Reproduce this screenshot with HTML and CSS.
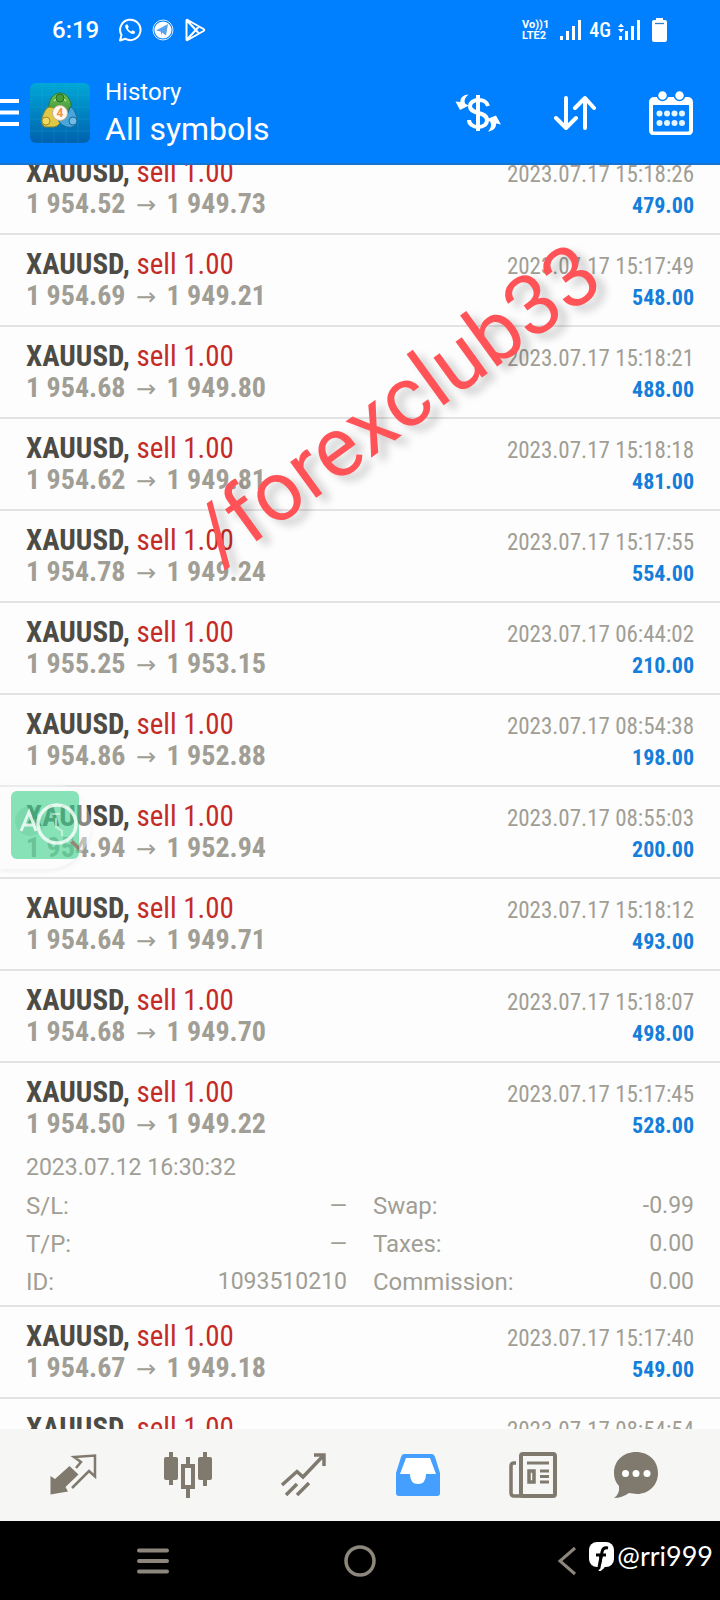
FILE: index.html
```html
<!DOCTYPE html>
<html lang="en">
<head>
<meta charset="utf-8">
<meta name="viewport" content="width=device-width, initial-scale=1">
<title>History</title>
<link rel="stylesheet" href="styles.css">
</head>
<body>
<div class="app">
  <div class="status">
    <span class="clock">6:19</span>
    <div class="status-icons">
      <svg width="24" height="24" viewBox="0 0 24 24" fill="none" stroke="#fff" stroke-width="2"><path d="M2 22.500l1.500-5.500A10.200 10.200 0 1 1 7.200 20.700Z" stroke-linejoin="round"/><path d="M8 6.500c-1.500 1-1 3.500 1.500 6.300s5.500 4 7.300 2.500l.4-1.500-2.500-1.500-1.500 1.300c-1.500-.5-2.800-1.900-3.400-3.400l1-1.200L9.500 6.500Z" fill="#fff" stroke="none"/></svg>
      <svg width="22" height="22" viewBox="0 0 22 22"><circle cx="11" cy="11" r="10" fill="none" stroke="#d5ecff" stroke-width="1"/><circle cx="11" cy="11" r="8.600" fill="#fff"/><path d="M4 11.500L16 5l-2 11.500-4-3v3l-1.500-4Z" fill="#5aa2ee"/></svg>
      <svg width="22" height="24" viewBox="0 0 22 24" fill="none" stroke="#fff" stroke-width="2" stroke-linejoin="round"><path d="M2.500 2.500v19c0 .8.700.8 1.200.5l15.800-9q1.500-1 0-2L3.700 2q-1-.5-1.200.5ZM3 2.500L14.500 15M3 21.500L14.500 9"/></svg>
    </div>
    <div class="status-right">
      <div class="volte"><span>Vo))1</span><span>LTE2</span></div>
      <svg class="signal" width="22" height="20" viewBox="0 0 22 20" fill="#fff"><path d="M0 16h3v4H0zM6 11h3v9H6zM12 6h3v14h-3zM18 0h3v20h-3z"/></svg>
      <span class="network">4G</span>
      <svg class="signal" width="23" height="20" viewBox="0 0 23 20" fill="#fff"><path d="M1 16h3v4H1zM7 11h3v9H7zM13 6h3v14h-3zM19 0h3v20h-3zM0 7l3-3.500L6 7zM0 9l3 3.500L6 9z"/></svg>
      <svg class="battery" width="15" height="24" viewBox="0 0 15 24"><path d="M4 0h7v2h2q2 0 2 2v18q0 2-2 2H2q-2 0-2-2V4q0-2 2-2h2Z" fill="#fff"/><path d="M3 5.500h9" stroke="#2a80ce" stroke-width="1.300"/></svg>
    </div>
  </div>

  <header class="toolbar">
    <button class="icon-button menu" aria-label="Menu"><svg width="19" height="27" viewBox="0 0 19 27" stroke="#fff" stroke-width="4"><path d="M0 2h19M0 13.500h19M0 25h19"/></svg></button>
    <svg class="logo" width="60" height="60" viewBox="0 0 60 60">
      <defs><linearGradient id="sea" x1="0" y1="0" x2="0" y2="1"><stop offset="0" stop-color="#00a7d6"/><stop offset="1" stop-color="#0061ae"/></linearGradient>
      <linearGradient id="leaf" x1="0" y1="0" x2="0" y2="1"><stop offset="0" stop-color="#78c255"/><stop offset="1" stop-color="#2f8f35"/></linearGradient></defs>
      <rect width="60" height="60" rx="6" fill="url(#sea)"/>
      <path d="M12 0v60M24 0v60M36 0v60M48 0v60M0 12h60M0 24h60M0 36h60M0 48h60" stroke="#37b9df" stroke-opacity=".2"/>
      <path d="M30 10c7 0 12 8 11 15-1 4-5 7-11 7s-10-3-11-7c-1-7 4-15 11-15Z" fill="url(#leaf)" stroke="#287a35"/>
      <path d="M20 24c4 0 9 4 11 10 1 5-3 10-8 10H15c-4-2-4-7-2-12s4-8 7-8Z" fill="#dfc845" stroke="#7e8430"/>
      <path d="M40 24c4 1 6 7 7 11s-1 8-5 9-11-1-14-7c4 2 9-1 12-13Z" fill="#48a6da" stroke="#17689c"/>
      <path d="M24 18q6-6 12 0" fill="none" stroke="#b6e08e" stroke-width="1.500"/>
      <circle cx="30" cy="15" r="4" fill="#479c37" stroke="#246f2c"/><circle cx="16" cy="38" r="4" fill="#f0da62" stroke="#9b8b30"/><circle cx="43" cy="38" r="4" fill="#6dbde6" stroke="#17689c"/>
      <circle cx="30" cy="30" r="7.500" fill="#fff8ee" stroke="#c9b693"/><text class="logo-digit" x="30" y="34" text-anchor="middle">4</text>
    </svg>
    <div class="heading"><span class="section">History</span><h1>All symbols</h1></div>
    <div class="actions">
      <button class="icon-button" aria-label="Currency"><svg width="46" height="40" viewBox="0 0 46 40" fill="none" stroke="#fff"><path d="M23 2v36" stroke-width="4"/><path d="M33 13c-1-4-5-6-9-6-6 0-9 3-9 6 0 9 17 5 17 14 0 4-3 7-9 7-5 0-9-3-9-7" stroke-width="4"/><path d="M13.500 1.500C8 2 5 5 5.500 9L.5 8.500 5 17l9-4.500-3.500-1.500c-2-3-.5-6.500 3-9.500ZM33 38.500c5.500-.5 8.500-4 8-8l5 1-5-9-10 4 4 2c2 3 1 7-2 10Z" fill="#fff" stroke="none"/></svg></button>
      <button class="icon-button" aria-label="Sort"><svg width="42" height="36" viewBox="0 0 42 36" fill="none" stroke="#fff" stroke-width="4" stroke-linecap="round" stroke-linejoin="round"><path d="M12 3v30M2 23l10 10 10-10M31 33V3M21 13L31 3l9 10"/></svg></button>
      <button class="icon-button" aria-label="Calendar"><svg width="44" height="44" viewBox="0 0 44 44"><rect x="2" y="8" width="40" height="34.500" rx="3" fill="none" stroke="#fff" stroke-width="4"/><path d="M2 7h40v7H2z" fill="#fff"/><g fill="#fff" stroke="#007fff" stroke-width="1.500"><circle cx="13.500" cy="4.500" r="5"/><circle cx="30.500" cy="4.500" r="5"/></g><g fill="#e4f5ff"><circle cx="10.500" cy="22.500" r="3"/><circle cx="18" cy="22.500" r="3"/><circle cx="25.500" cy="22.500" r="3"/><circle cx="33" cy="22.500" r="3"/><circle cx="10.500" cy="32" r="3"/><circle cx="18" cy="32" r="3"/><circle cx="25.500" cy="32" r="3"/><circle cx="33" cy="32" r="3"/></g></svg></button>
    </div>
  </header>

  <main class="history">
    <ul class="deals" id="deals">
      <li class="deal"><div class="line"><span class="symbol">XAUUSD, <span class="side">sell 1.00</span></span><time class="date">2023.07.17 15:18:26</time></div><div class="line"><span class="prices">1 954.52 <span class="arrow">→</span> 1 949.73</span><span class="profit">479.00</span></div></li>
      <li class="deal"><div class="line"><span class="symbol">XAUUSD, <span class="side">sell 1.00</span></span><time class="date">2023.07.17 15:17:49</time></div><div class="line"><span class="prices">1 954.69 <span class="arrow">→</span> 1 949.21</span><span class="profit">548.00</span></div></li>
      <li class="deal"><div class="line"><span class="symbol">XAUUSD, <span class="side">sell 1.00</span></span><time class="date">2023.07.17 15:18:21</time></div><div class="line"><span class="prices">1 954.68 <span class="arrow">→</span> 1 949.80</span><span class="profit">488.00</span></div></li>
      <li class="deal"><div class="line"><span class="symbol">XAUUSD, <span class="side">sell 1.00</span></span><time class="date">2023.07.17 15:18:18</time></div><div class="line"><span class="prices">1 954.62 <span class="arrow">→</span> 1 949.81</span><span class="profit">481.00</span></div></li>
      <li class="deal"><div class="line"><span class="symbol">XAUUSD, <span class="side">sell 1.00</span></span><time class="date">2023.07.17 15:17:55</time></div><div class="line"><span class="prices">1 954.78 <span class="arrow">→</span> 1 949.24</span><span class="profit">554.00</span></div></li>
      <li class="deal"><div class="line"><span class="symbol">XAUUSD, <span class="side">sell 1.00</span></span><time class="date">2023.07.17 06:44:02</time></div><div class="line"><span class="prices">1 955.25 <span class="arrow">→</span> 1 953.15</span><span class="profit">210.00</span></div></li>
      <li class="deal"><div class="line"><span class="symbol">XAUUSD, <span class="side">sell 1.00</span></span><time class="date">2023.07.17 08:54:38</time></div><div class="line"><span class="prices">1 954.86 <span class="arrow">→</span> 1 952.88</span><span class="profit">198.00</span></div></li>
      <li class="deal"><div class="line"><span class="symbol">XAUUSD, <span class="side">sell 1.00</span></span><time class="date">2023.07.17 08:55:03</time></div><div class="line"><span class="prices">1 954.94 <span class="arrow">→</span> 1 952.94</span><span class="profit">200.00</span></div></li>
      <li class="deal"><div class="line"><span class="symbol">XAUUSD, <span class="side">sell 1.00</span></span><time class="date">2023.07.17 15:18:12</time></div><div class="line"><span class="prices">1 954.64 <span class="arrow">→</span> 1 949.71</span><span class="profit">493.00</span></div></li>
      <li class="deal"><div class="line"><span class="symbol">XAUUSD, <span class="side">sell 1.00</span></span><time class="date">2023.07.17 15:18:07</time></div><div class="line"><span class="prices">1 954.68 <span class="arrow">→</span> 1 949.70</span><span class="profit">498.00</span></div></li>
      <li class="deal expanded"><div class="line"><span class="symbol">XAUUSD, <span class="side">sell 1.00</span></span><time class="date">2023.07.17 15:17:45</time></div><div class="line"><span class="prices">1 954.50 <span class="arrow">→</span> 1 949.22</span><span class="profit">528.00</span></div>
        <div class="details">
          <time class="opened">2023.07.12 16:30:32</time>
          <div class="detail"><span>S/L:</span><span class="dash">—</span></div><div class="detail"><span>Swap:</span><span class="value">-0.99</span></div>
          <div class="detail"><span>T/P:</span><span class="dash">—</span></div><div class="detail"><span>Taxes:</span><span class="value">0.00</span></div>
          <div class="detail"><span>ID:</span><span class="value">1093510210</span></div><div class="detail"><span>Commission:</span><span class="value">0.00</span></div>
        </div></li>
      <li class="deal"><div class="line"><span class="symbol">XAUUSD, <span class="side">sell 1.00</span></span><time class="date">2023.07.17 15:17:40</time></div><div class="line"><span class="prices">1 954.67 <span class="arrow">→</span> 1 949.18</span><span class="profit">549.00</span></div></li>
      <li class="deal"><div class="line"><span class="symbol">XAUUSD, <span class="side">sell 1.00</span></span><time class="date">2023.07.17 08:54:54</time></div></li>
    </ul>
  </main>

  <nav class="tabs">
    <button class="icon-button" aria-label="Quotes"><svg width="48" height="48" viewBox="0 0 48 48"><path d="M20.500 15l9 8.500-13 12.500 2.500 4.500-17.500 3V25l4.500 3Z" fill="#7f7a6d"/><path d="M27 17l5-6-7-5 21-1.500v21l-6-5.500L23 37" fill="none" stroke="#7f7a6d" stroke-width="2.500"/></svg></button>
    <button class="icon-button" aria-label="Charts"><svg width="48" height="48" viewBox="0 0 48 48" fill="#7f7a6d"><rect x="0" y="6" width="14" height="23" rx="2"/><path d="M5 1h4v33H5zM39 1h4v34h-4zM22 6h4v8h-4zM22 37h4v10h-4z"/><rect x="34" y="6" width="14" height="23" rx="2"/><path fill-rule="evenodd" d="M17 13h14v25H17zM21 17v17h6V17Z"/></svg></button>
    <button class="icon-button" aria-label="Trade"><svg width="48" height="48" viewBox="0 0 48 48" fill="none" stroke="#7f7a6d" stroke-width="3.500"><path d="M3 34l15-13.500 6 5.500L44 5M35 4h10v11M7 44l11-11M18 44l12-12"/></svg></button>
    <button class="icon-button" aria-label="History"><svg width="46" height="44" viewBox="0 0 46 44"><path d="M9 1h28q2 0 3 3l5 16v20q0 3-3 3H4q-3 0-3-3V20L6 4q1-3 3-3Z" fill="#449fff"/><path d="M11 5h24l6 16H31q0 10-8 10t-8-10H5Z" fill="#fff"/></svg></button>
    <button class="icon-button" aria-label="News"><svg width="48" height="48" viewBox="0 0 48 48" fill="none" stroke="#7f7a6d" stroke-width="4"><rect x="12" y="3" width="34" height="42" rx="2"/><path d="M7 12H5q-3 0-3 3v27q0 3 3 3h10" stroke-width="3.500"/><path d="M18 12h22M31 20h9M31 25.500h9M31 31h9" stroke-width="3"/><rect x="20" y="20" width="5" height="11" stroke-width="3.500"/></svg></button>
    <button class="icon-button" aria-label="Chat"><svg width="46" height="46" viewBox="0 0 46 46"><path d="M23 0c13 0 22 9 22 21S36 42 24 42l-8-1q-7 5-15 5 6-4 5-12Q1 29 1 21C1 9 10 0 23 0Z" fill="#7f7a6d"/><g fill="#fff"><circle cx="12.500" cy="21.500" r="3.500"/><circle cx="23" cy="21.500" r="3.500"/><circle cx="34" cy="21.500" r="3.500"/></g></svg></button>
  </nav>

  <nav class="system">
    <button class="icon-button" aria-label="Recent apps"><svg width="32" height="26" viewBox="0 0 32 26" stroke="#8d867c" stroke-width="4" stroke-linecap="round"><path d="M2 2.500h28M2 13h28M2 23.500h28"/></svg></button>
    <button class="icon-button" aria-label="Home"><svg width="32" height="32" viewBox="0 0 32 32" fill="none" stroke="#8d867c" stroke-width="3.500"><circle cx="16" cy="16" r="14"/></svg></button>
    <button class="icon-button" aria-label="Back"><svg width="20" height="30" viewBox="0 0 20 30" fill="none" stroke="#8d867c" stroke-width="3"><path d="M18 2L3 15l15 13"/></svg></button>
  </nav>

  <button class="translate" aria-label="Translate"><svg width="80" height="68" viewBox="0 0 80 68">
    <rect width="68" height="68" rx="6" fill="#12c873" fill-opacity=".5"/><circle cx="19" cy="30" r="15" fill="#279064" fill-opacity=".12"/>
    <path d="M59 52l3-3 6 6v5Z" fill="#9c6258" fill-opacity=".7"/>
    <g fill="none" stroke="#fff" stroke-opacity=".8"><path d="M10 40l8-19 7 19M13 34h10" stroke-width="3"/><circle cx="46" cy="33" r="19" stroke-width="3.500"/><path d="M41 23h8M45 27v9l6 4v5" stroke-width="2" stroke-opacity=".5"/></g></svg></button>
  <span class="stamp">/forexclub33</span>
  <div class="handle"><svg width="25" height="29" viewBox="0 0 25 29"><rect width="25" height="25" rx="8" fill="#fff"/><path d="M12 28l3-15h-5M10 29l5-4" stroke="#fff" stroke-width="2"/><path d="M19 6q-5-1-6 4l-3 15M7 13h10" fill="none" stroke="#000" stroke-width="3"/></svg><span>@rri999</span></div>
</div>
</body>
</html>
```
FILE: styles.css
```css
* { box-sizing: border-box; }
body { margin: 0; font-family: Roboto, "Liberation Sans", sans-serif; background: #fdfdfd; }
.app { position: relative; display: flex; flex-direction: column; height: 100vh; overflow: hidden; }
svg { display: block; }
.icon-button { padding: 0; border: 0; background: none; cursor: pointer; }

.status { display: flex; align-items: center; flex: none; height: 60px; padding: 0 53px 0 52px; background: #007fff; color: #fff; }
.clock { font-size: 24px; font-weight: 500; }
.status-icons { display: flex; align-items: center; gap: 10px; margin-left: 19px; }
.status-right { display: flex; align-items: center; gap: 7px; margin-left: auto; }
.volte { display: flex; flex-direction: column; font-size: 11px; line-height: 11px; font-weight: 700; margin-right: 4px; }
.network { font-family: "Roboto Condensed", "Liberation Sans Narrow", Roboto, sans-serif; font-size: 20px; font-weight: 500; }
.battery { margin-left: 4px; }

.toolbar { display: flex; align-items: center; flex: none; height: 105px; padding: 2px 27px 0 0; border-bottom: 2px solid #1673ce; background: #007fff; color: #fff; }
.logo { margin-left: 11px; }
.logo-digit { font-size: 12px; font-weight: 700; fill: #f09048; }
.heading { margin-left: 15px; }
.section { display: block; font-size: 24px; line-height: 30px; }
h1 { margin: 2px 0 0; font-size: 32px; line-height: 40px; font-weight: 400; }
.actions { display: flex; align-items: center; gap: 53px; margin-left: auto; }

.history { flex: 1; min-height: 0; overflow: hidden; font-family: "Roboto Condensed", "Liberation Sans Narrow", Roboto, sans-serif; }
.deals { list-style: none; margin: -22px 0 0; padding: 0; }
.deal { padding: 13px 26px; border-bottom: 2px solid #e3e3e3; }
.expanded { padding-bottom: 4px; }
.line { display: flex; justify-content: space-between; align-items: baseline; height: 32px; line-height: 32px; }
.symbol, .prices { font-weight: 700; white-space: pre; }
.symbol { font-size: 29px; color: #4d4b46; }
.side { font-weight: 400; color: #c52b26; }
.prices { font-size: 28px; color: #a09e95; }
.arrow { margin: 0 4px; font-family: "DejaVu Sans", sans-serif; font-size: 24px; font-weight: 400; }
.date { font-size: 23px; color: #a09e95; }
.profit { font-size: 22px; font-weight: 700; color: #147edb; }
.details { display: grid; grid-template-columns: 1fr 1fr; column-gap: 26px; margin-top: 9px; font-family: Roboto, sans-serif; font-size: 24px; line-height: 38px; color: #a09e95; }
.opened { grid-column: 1 / -1; }
.opened, .value { font-size: 23px; }
.dash { font-size: 22px; }
.detail { display: flex; justify-content: space-between; }

.tabs { display: grid; grid-template-columns: repeat(5, 115fr) 92fr; align-items: center; justify-items: center; flex: none; height: 92px; padding: 0 38px 0 15px; background: #f6f6f5; }
.system { display: grid; grid-template-columns: repeat(3, 1fr); align-items: center; justify-items: center; flex: none; height: 79px; padding: 0 50px; background: #000; }

.translate { position: absolute; left: 0; top: 782px; padding: 9px 0 10px 11px; border: 0; border-radius: 0 45px 45px 0; background: rgba(250, 250, 250, .35); box-shadow: 0 2px 5px rgba(0, 0, 0, .06); }
.stamp { position: absolute; left: 221px; top: 497px; font-size: 84px; line-height: 84px; color: #ff5357; text-shadow: 4px 9px 8px rgba(0, 0, 0, .2); transform: rotate(-36deg); transform-origin: 0 70px; }
.handle { position: absolute; right: 7px; bottom: 28px; display: flex; align-items: center; gap: 3px; font-family: Lato, sans-serif; font-size: 27px; line-height: 32px; color: #fff; }
```
